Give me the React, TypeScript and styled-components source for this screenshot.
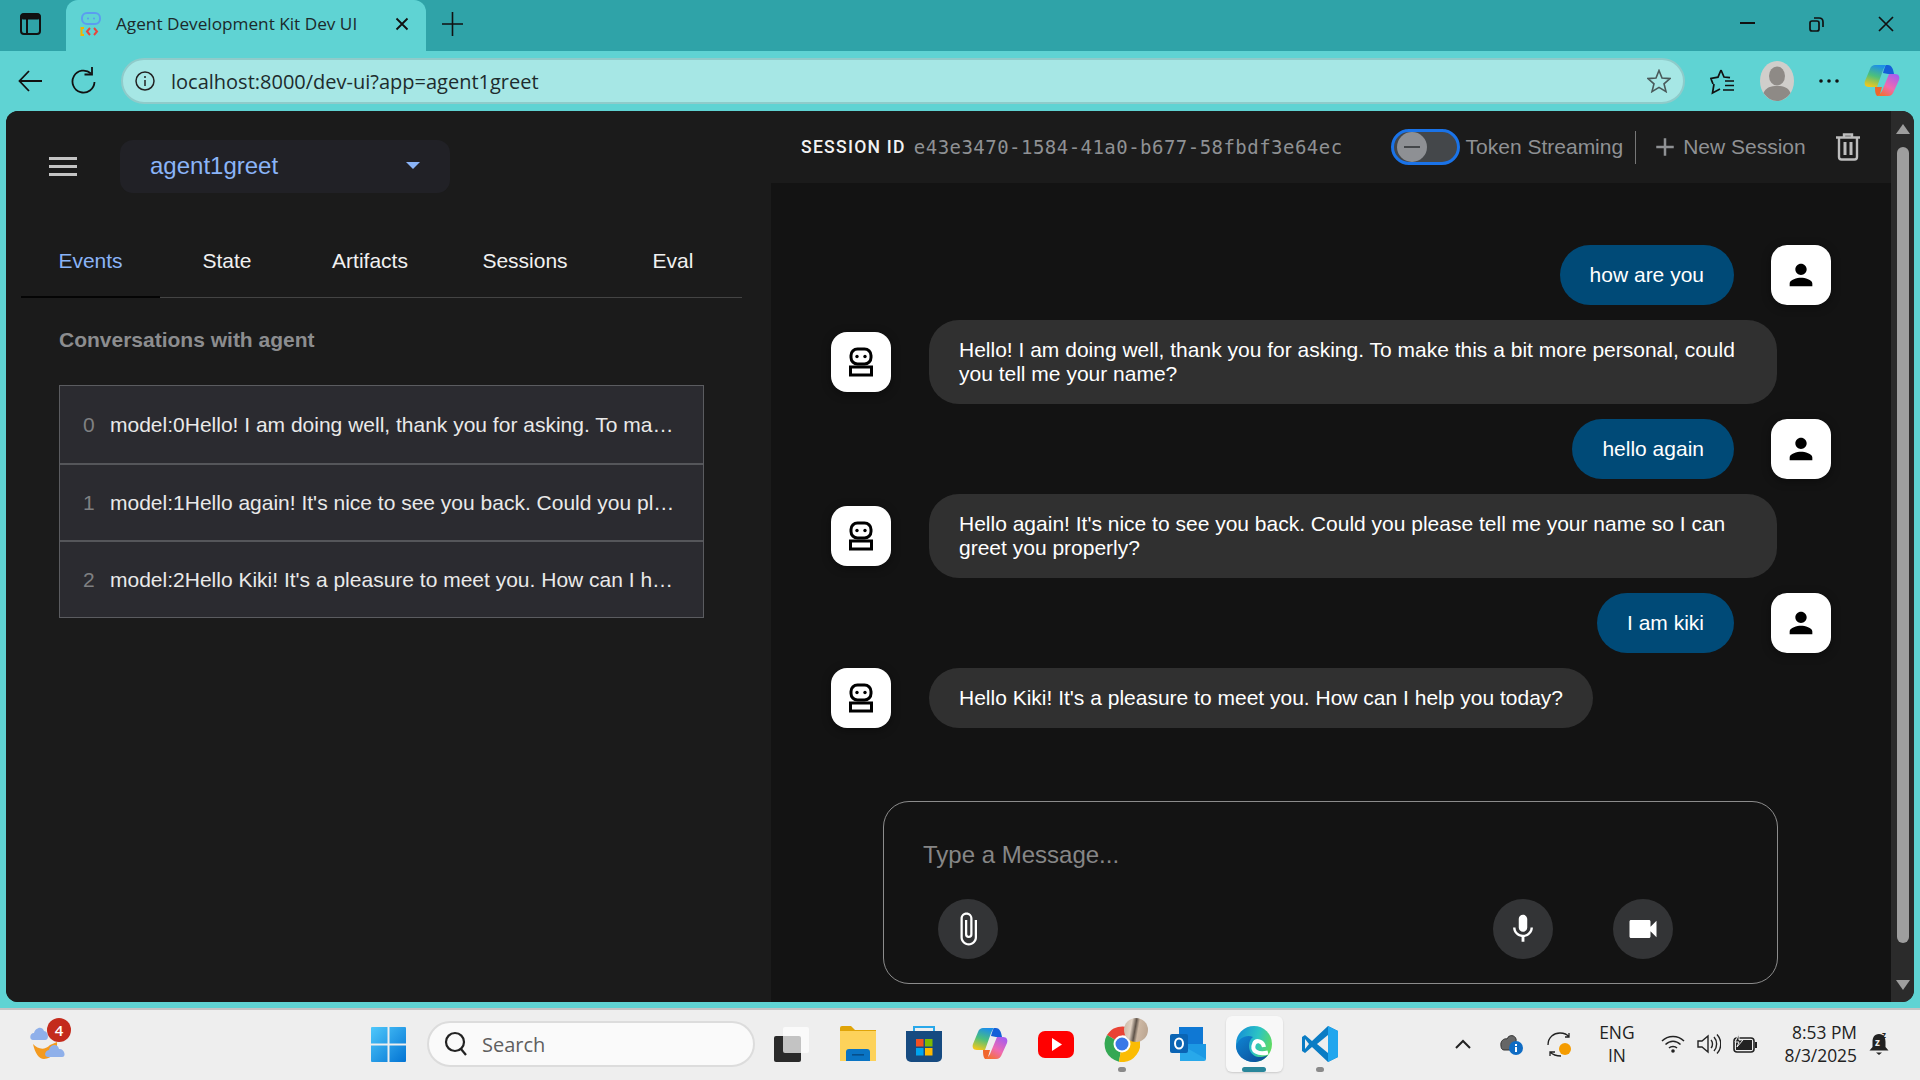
import styled, { createGlobalStyle } from "styled-components";
import { MdPerson, MdMic, MdVideocam, MdAttachFile, MdAdd } from "react-icons/md";

const Global = createGlobalStyle`
    html, body {
        margin: 0;
        padding: 0;
        width: 1920px;
        height: 1080px;
        overflow: hidden;
        background: #5fd3d3;
    }
    * { box-sizing: border-box; }
`

const Screen = styled.div`
    display: flex;
    flex-direction: column;
    width: 1920px;
    height: 1080px;
    font-family: "Liberation Sans", Arial, sans-serif;
`

/* browser chrome */
const TabStrip = styled.div`
    display: flex;
    align-items: center;
    height: 51px;
    background: #2fa3a8;
    padding: 0 0 4px 20px;
    color: #111;
`

const Tab = styled.div`
    display: flex;
    align-items: center;
    align-self: stretch;
    width: 360px;
    margin: 0 0 -4px 25px;
    padding: 0 17px 4px 14px;
    gap: 14px;
    background: #5fd3d3;
    border-radius: 12px 12px 0 0;
    font-family: "Open Sans", sans-serif;
    font-size: 17.2px;
    color: #1c2a2b;
    span { flex: 1; white-space: nowrap; }
`

const NewTab = styled.div`
    display: flex;
    margin-left: 16px;
`

const WinButtons = styled.div`
    display: flex;
    align-items: center;
    gap: 54px;
    margin-left: auto;
    padding-right: 26px;
`

const Toolbar = styled.div`
    display: flex;
    align-items: center;
    height: 60px;
    background: #5fd3d3;
    padding-left: 18px;
`

const NavIcons = styled.div`
    display: flex;
    align-items: center;
    gap: 29px;
    margin-right: 25px;
`

const AddressBar = styled.div`
    display: flex;
    align-items: center;
    width: 1564px;
    height: 46px;
    border-radius: 23px;
    background: #a6e7e5;
    border: 2px solid #8fcbca;
    padding: 0 12px;
    gap: 16px;
    font-family: "Open Sans", sans-serif;
    font-size: 20px;
    color: #1d2c2d;
    span { flex: 1; }
`

const ToolIcons = styled.div`
    display: flex;
    align-items: center;
    margin-left: 25px;
    gap: 25px;
`

const Workspace = styled.div`
    flex: 1;
    display: flex;
    min-height: 0;
    background: #5fd3d3;
    padding: 0 6px 6px 6px;
`

const AppWindow = styled.div`
    flex: 1;
    display: flex;
    border-radius: 12px;
    overflow: hidden;
    background: #1b1b1b;
    color: #fff;
`

/* left panel */
const SidePanel = styled.div`
    width: 765px;
    display: flex;
    flex-direction: column;
    background: #1b1b1b;
    padding: 29px 29px 0 15px;
`

const SideTop = styled.div`
    display: flex;
    align-items: center;
    height: 53px;
    padding-left: 28px;
    gap: 43px;
`

const Burger = styled.div`
    display: flex;
    flex-direction: column;
    gap: 5px;
    width: 28px;
    i { display: block; height: 3px; background: #c4c4c4; }
`

const AgentSelect = styled.div`
    display: flex;
    align-items: center;
    justify-content: space-between;
    width: 330px;
    height: 53px;
    padding: 0 30px 2px 30px;
    background: #212126;
    border-radius: 13px;
    color: #8ab4f8;
    font-size: 24px;
`

const Caret = styled.div`
    width: 0;
    height: 0;
    border-left: 7px solid transparent;
    border-right: 7px solid transparent;
    border-top: 7px solid #8ab4f8;
`

const Tabs = styled.div`
    display: grid;
    grid-template-columns: 139px 134px 152px 158px 138px;
    height: 74px;
    margin-top: 31px;
    border-bottom: 1px solid #444;
`

const TabItem = styled.div<{ $active?: boolean }>`
    display: flex;
    align-items: center;
    justify-content: center;
    margin-bottom: -1px;
    padding-top: 2px;
    font-size: 21px;
    color: ${p => (p.$active ? "#8ab4f8" : "#f1f1f1")};
    border-bottom: 2px solid ${p => (p.$active ? "#050505" : "transparent")};
`

const SectionTitle = styled.div`
    margin: 30px 0 0 38px;
    font-size: 21px;
    font-weight: 700;
    color: #8c8d8f;
    line-height: 24px;
`

const EventList = styled.div`
    display: flex;
    flex-direction: column;
    width: 645px;
    margin: 33px 0 0 38px;
    border: 1px solid #5b5c60;
`

const EventRow = styled.div`
    display: flex;
    align-items: center;
    height: 77px;
    padding: 0 28px 0 23px;
    background: #2b2b30;
    font-size: 21px;
    color: #e9e9e9;
    & + & { border-top: 2px solid #55565a; }
`

const EventIndex = styled.span`
    width: 27px;
    color: #7f8082;
`

const EventText = styled.span`
    flex: 1;
    min-width: 0;
    white-space: nowrap;
    overflow: hidden;
    text-overflow: ellipsis;
`

/* right panel */
const MainPanel = styled.div`
    flex: 1;
    display: flex;
    flex-direction: column;
    min-width: 0;
`

const TopBar = styled.div`
    display: flex;
    align-items: center;
    height: 72px;
    padding-left: 30px;
    background: #1b1b1b;
`

const SessionLabel = styled.span`
    font-family: Roboto, sans-serif;
    font-size: 17.6px;
    font-weight: 500;
    letter-spacing: 1.25px;
    color: #f2f2f2;
`

const SessionValue = styled.span`
    margin-left: 8px;
    font-family: "DejaVu Sans Mono", monospace;
    font-size: 19px;
    letter-spacing: 0.47px;
    color: #8f9194;
`

const Toggle = styled.div`
    display: flex;
    align-items: center;
    width: 69px;
    height: 36px;
    margin-left: 48px;
    padding-left: 3px;
    border: 3px solid #1a73e8;
    border-radius: 18px;
    background: #44474a;
`

const ToggleThumb = styled.div`
    display: flex;
    align-items: center;
    justify-content: center;
    width: 30px;
    height: 30px;
    border-radius: 50%;
    background: #8e9094;
    i { display: block; width: 16px; height: 2px; background: #44474a; }
`

const BarLabel = styled.span`
    font-size: 21px;
    color: #8f9194;
    white-space: nowrap;
`

const StreamLabel = styled(BarLabel)`
    margin-left: 6px;
`

const Divider = styled.div`
    width: 1px;
    height: 33px;
    margin: 0 12px;
    background: #777;
`

const NewSession = styled.div`
    display: flex;
    align-items: center;
    gap: 3px;
    margin-left: 2px;
    color: #8f9194;
`

const TrashBtn = styled.div`
    display: flex;
    margin-left: 30px;
`

const ChatArea = styled.div`
    flex: 1;
    display: flex;
    flex-direction: column;
    justify-content: space-between;
    min-height: 0;
    background: #131313;
    padding: 62px 60px 18px 60px;
`

const Messages = styled.div`
    display: flex;
    flex-direction: column;
    gap: 15px;
`

const MessageRow = styled.div<{ $user?: boolean }>`
    display: flex;
    align-items: center;
    justify-content: ${p => (p.$user ? "flex-end" : "flex-start")};
    gap: ${p => (p.$user ? "37px" : "38px")};
`

const Avatar = styled.div`
    flex: none;
    display: flex;
    align-items: center;
    justify-content: center;
    width: 60px;
    height: 60px;
    border-radius: 16px;
    background: #fff;
    color: #000;
    box-shadow: 0 2px 10px #00000066;
`

const Bubble = styled.div<{ $user?: boolean }>`
    padding: 18px 30px;
    max-width: 848px;
    border-radius: 30px;
    font-size: 21px;
    line-height: 24px;
    color: #fff;
    background: ${p => (p.$user ? "#004a77" : "#303030")};
`

const Composer = styled.div`
    display: flex;
    flex-direction: column;
    height: 183px;
    margin: 0 53px 0 52px;
    padding: 35px 104px 24px 39px;
    border: 1px solid #8c8c8c;
    border-radius: 26px;
`

const ComposerInput = styled.input`
    border: none;
    outline: none;
    background: transparent;
    height: 36px;
    padding: 0;
    font-family: "Liberation Sans", Arial, sans-serif;
    font-size: 24px;
    color: #fff;
    &::placeholder { color: #868686; opacity: 1; }
`

const ComposerActions = styled.div`
    display: flex;
    align-items: center;
    margin-top: auto;
    padding-left: 15px;
    gap: 60px;
`

const RoundBtn = styled.div<{ $push?: boolean }>`
    display: flex;
    align-items: center;
    justify-content: center;
    width: 60px;
    height: 60px;
    border-radius: 50%;
    background: #333436;
    color: #fff;
    margin-right: ${p => (p.$push ? "auto" : "0")};
`

const Scrollbar = styled.div`
    flex: none;
    width: 23px;
    display: flex;
    flex-direction: column;
    align-items: center;
    padding: 13px 0 12px;
    background: #2b2b2b;
`

const ScrollThumb = styled.div`
    flex: 1;
    width: 12px;
    margin: 13px 0 37px;
    border-radius: 6px;
    background: #9e9e9e;
`

const ScrollArrow = styled.div<{ $down?: boolean }>`
    width: 0;
    height: 0;
    border-left: 7px solid transparent;
    border-right: 7px solid transparent;
    ${p => (p.$down ? "border-top: 10px solid #9e9e9e;" : "border-bottom: 10px solid #9e9e9e;")}
`

/* windows taskbar */
const Taskbar = styled.div`
    display: flex;
    align-items: center;
    height: 72px;
    flex: none;
    padding-bottom: 2px;
    background: #eeeeee;
    border-top: 2px solid #c4c4c4;
    color: #1c1c1c;
`

const WeatherSlot = styled.div`
    position: relative;
    width: 371px;
    padding-left: 30px;
    display: flex;
`

const WeatherBadge = styled.div`
    position: absolute;
    left: 47px;
    top: -5px;
    width: 24px;
    height: 24px;
    border-radius: 50%;
    background: #c42b1c;
    color: #fff;
    font-family: "Open Sans", sans-serif;
    font-size: 15px;
    font-weight: 600;
    display: flex;
    align-items: center;
    justify-content: center;
`

const SearchBox = styled.div`
    display: flex;
    align-items: center;
    gap: 14px;
    width: 328px;
    height: 46px;
    margin: 0 19px 0 21px;
    padding-left: 15px;
    background: #fafafa;
    border: 2px solid #dcdcdc;
    border-radius: 23px;
    font-family: "Open Sans", sans-serif;
    font-size: 20px;
    color: #5f5f5f;
`

const AppIcons = styled.div`
    display: flex;
    align-items: center;
    gap: 30px;
`

const AppIcon = styled.div<{ $active?: boolean; $dot?: boolean }>`
    position: relative;
    display: flex;
    width: 36px;
    height: 36px;
    ${p => p.$active && `
        &::before {
            content: "";
            position: absolute;
            left: -10px;
            top: -10px;
            width: 57px;
            height: 56px;
            border-radius: 6px;
            background: #f8f8f8;
            box-shadow: 0 1px 2px #00000026;
        }
        &::after {
            content: "";
            position: absolute;
            left: 6px;
            top: 41px;
            width: 24px;
            height: 5px;
            border-radius: 3px;
            background: #28869a;
        }
    `}
    ${p => p.$dot && `
        &::after {
            content: "";
            position: absolute;
            left: 14px;
            top: 41px;
            width: 8px;
            height: 5px;
            border-radius: 3px;
            background: #8a8a8a;
        }
    `}
    svg { position: relative; }
`

const ChromeSticker = styled.div`
    position: absolute;
    left: 20px;
    top: -8px;
    width: 24px;
    height: 24px;
    border-radius: 50%;
    background: linear-gradient(100deg, #c9b5a2 0%, #e2d3c4 30%, #5f5349 46%, #cdb8a4 58%, #b8a28e 100%);
`

const Tray = styled.div`
    display: flex;
    align-items: center;
    margin-left: auto;
    padding-right: 31px;
`

const TrayItem = styled.div<{ $gap: number }>`
    display: flex;
    margin-left: ${p => p.$gap}px;
`

const TrayText = styled.div<{ $gap: number; $align: string }>`
    margin-left: ${p => p.$gap}px;
    text-align: ${p => p.$align};
    font-family: "Open Sans", sans-serif;
    font-size: 17.4px;
    line-height: 23px;
    color: #222;
    white-space: nowrap;
`

const stroke = { fill: "none", stroke: "currentColor" };

function BotGlyph() {
    return (
        <svg width="26" height="30" viewBox="0 0 26 30">
            <rect x="3" y="2" width="20" height="15" rx="6.5" fill="none" stroke="#000" strokeWidth="3" />
            <circle cx="9" cy="9.5" r="1.7" fill="#000" />
            <circle cx="17" cy="9.5" r="1.7" fill="#000" />
            <rect x="2.5" y="20" width="21" height="8" fill="none" stroke="#000" strokeWidth="3" />
        </svg>
    );
}

function Favicon() {
    return (
        <svg width="22" height="26" viewBox="0 0 22 26">
            <rect x="2" y="2" width="18" height="11" rx="5" fill="none" stroke="#5b9df0" strokeWidth="2" />
            <circle cx="8" cy="7.5" r="1" fill="#5b9df0" />
            <circle cx="14" cy="7.5" r="1" fill="#5b9df0" />
            <path d="M4 17 L1.5 17 L1.5 24 L4 24" fill="none" stroke="#f4b400" strokeWidth="2" />
            <path d="M10 17 L7 20.5 L10 24" fill="none" stroke="#e8453c" strokeWidth="2" />
            <path d="M14 17 L17 20.5 L14 24" fill="none" stroke="#e8453c" strokeWidth="2" />
        </svg>
    );
}

function Copilot({ id }: { id: string }) {
    return (
        <svg width="36" height="36" viewBox="0 0 36 36">
            <defs>
                <linearGradient id={id + "a"} x1="0.6" y1="0" x2="0.3" y2="1">
                    <stop offset="0" stopColor="#1d8fe8" />
                    <stop offset="0.5" stopColor="#4cc07c" />
                    <stop offset="1" stopColor="#f2c81c" />
                </linearGradient>
                <linearGradient id={id + "b"} x1="0.8" y1="0" x2="0.2" y2="1">
                    <stop offset="0" stopColor="#a45cf0" />
                    <stop offset="0.55" stopColor="#ef6ab0" />
                    <stop offset="1" stopColor="#f5702e" />
                </linearGradient>
            </defs>
            <path d="M22 2 H24 C27 2 29 5 30 11 H24 L19 10 C20 6 21 3 22 2Z" fill="#1460d8" />
            <path d="M13 24 H18 L16 31 C15.5 33 14 33 13 33 C11 31 11 27 11 24Z" fill="#f0662c" />
            <path d="M11 2 H22 C20 4 19 7 18 10 L13 24 H5 C1 24 0 21 1 18 L6 6 C7 3 9 2 11 2Z" fill={`url(#${id}a)`} />
            <path d="M25 11 H31 C35 11 36 14 35 17 L30 28 C29 31 27 33 24 33 H13 C15 32 17 30 18 28Z" fill={`url(#${id}b)`} />
        </svg>
    );
}

const events = [
    "model:0Hello! I am doing well, thank you for asking. To make this a bit more personal, could you tell me your name?",
    "model:1Hello again! It's nice to see you back. Could you please tell me your name so I can greet you properly?",
    "model:2Hello Kiki! It's a pleasure to meet you. How can I help you today?",
];

const chat = [
    { user: true, text: "how are you" },
    { user: false, text: "Hello! I am doing well, thank you for asking. To make this a bit more personal, could you tell me your name?" },
    { user: true, text: "hello again" },
    { user: false, text: "Hello again! It's nice to see you back. Could you please tell me your name so I can greet you properly?" },
    { user: true, text: "I am kiki" },
    { user: false, text: "Hello Kiki! It's a pleasure to meet you. How can I help you today?" },
];

function App(): JSX.Element {
    return (
        <Screen>
            <Global />
            <TabStrip>
                <svg width="21" height="22" viewBox="0 0 21 22" style={stroke}>
                    <rect x="1" y="1" width="19" height="20" rx="3" strokeWidth="2" stroke="#111" />
                    <rect x="1" y="1" width="19" height="5" rx="2" fill="#111" stroke="#111" />
                    <path d="M7 6 V21" stroke="#111" strokeWidth="2" />
                </svg>
                <Tab>
                    <Favicon />
                    <span>Agent Development Kit Dev UI</span>
                    <svg width="14" height="14" viewBox="0 0 14 14"><path d="M1.5 1.5 L12.5 12.5 M12.5 1.5 L1.5 12.5" stroke="#111" strokeWidth="1.8" /></svg>
                </Tab>
                <NewTab>
                    <svg width="21" height="24" viewBox="0 0 21 24"><path d="M10.5 0 V24 M0 12 H21" stroke="#111" strokeWidth="1.6" /></svg>
                </NewTab>
                <WinButtons>
                    <svg width="15" height="3" viewBox="0 0 15 3"><rect width="15" height="2" fill="#111" /></svg>
                    <svg width="15" height="16" viewBox="0 0 15 16" fill="none" stroke="#111" strokeWidth="1.7"><rect x="1" y="5" width="9" height="10" rx="2" /><path d="M5 2 H10 C12.5 2 14 3.5 14 6 V11" /></svg>
                    <svg width="16" height="16" viewBox="0 0 16 16"><path d="M1 1 L15 15 M15 1 L1 15" stroke="#111" strokeWidth="1.7" /></svg>
                </WinButtons>
            </TabStrip>

            <Toolbar>
                <NavIcons>
                    <svg width="24" height="24" viewBox="0 0 24 24" fill="none" stroke="#111" strokeWidth="1.8"><path d="M24 12 H1.5 M11 2 L1.5 12 L11 22" /></svg>
                    <svg width="25" height="28" viewBox="0 0 25 28" fill="none" stroke="#111" strokeWidth="1.8"><path d="M20 6.5 A11 11 0 1 0 23.5 15" /><path d="M21 0 V7.5 H13.5" /></svg>
                </NavIcons>
                <AddressBar>
                    <svg width="20" height="20" viewBox="0 0 20 20" fill="none" stroke="#222" strokeWidth="1.5"><circle cx="10" cy="10" r="9" /><path d="M10 9 V15 M10 5 V7" /></svg>
                    <span>localhost:8000/dev-ui?app=agent1greet</span>
                    <svg width="24" height="24" viewBox="0 0 24 24" fill="none" stroke="#4a5a5b" strokeWidth="1.6"><path d="M12 1.5 L15 9 L23 9.6 L17 14.8 L19 22.6 L12 18.4 L5 22.6 L7 14.8 L1 9.6 L9 9Z" /></svg>
                </AddressBar>
                <ToolIcons>
                    <svg width="25" height="27" viewBox="0 0 25 27" fill="none" stroke="#111" strokeWidth="1.7"><path d="M11 2 L14 9 L20 9.6 M3 16 L0.9 10.5 L8 9.2 L11 2 M4 16 L2.5 25 L10 21" /><path d="M15 13 H24 M15 17.5 H24 M13 22 H24" /></svg>
                    <svg width="34" height="40" viewBox="0 0 34 40"><ellipse cx="17" cy="20" rx="17" ry="20" fill="#d0cecb" /><ellipse cx="17" cy="15" rx="8" ry="9.5" fill="#8e8a86" /><path d="M3.5 32 C6 26 11 25 17 25 C23 25 28 26 30.5 32 C27 37 22 40 17 40 C12 40 7 37 3.5 32Z" fill="#8e8a86" /></svg>
                    <svg width="20" height="4" viewBox="0 0 20 4"><circle cx="2" cy="2" r="1.8" fill="#111" /><circle cx="10" cy="2" r="1.8" fill="#111" /><circle cx="18" cy="2" r="1.8" fill="#111" /></svg>
                    <Copilot id="cpTool" />
                </ToolIcons>
            </Toolbar>

            <Workspace>
                <AppWindow>
                    <SidePanel>
                        <SideTop>
                            <Burger><i /><i /><i /></Burger>
                            <AgentSelect>
                                agent1greet
                                <Caret />
                            </AgentSelect>
                        </SideTop>
                        <Tabs>
                            <TabItem $active>Events</TabItem>
                            <TabItem>State</TabItem>
                            <TabItem>Artifacts</TabItem>
                            <TabItem>Sessions</TabItem>
                            <TabItem>Eval</TabItem>
                        </Tabs>
                        <SectionTitle>Conversations with agent</SectionTitle>
                        <EventList>
                            {events.map((text, i) => (
                                <EventRow key={i}>
                                    <EventIndex>{i}</EventIndex>
                                    <EventText>{text}</EventText>
                                </EventRow>
                            ))}
                        </EventList>
                    </SidePanel>

                    <MainPanel>
                        <TopBar>
                            <SessionLabel>SESSION ID</SessionLabel>
                            <SessionValue>e43e3470-1584-41a0-b677-58fbdf3e64ec</SessionValue>
                            <Toggle><ToggleThumb><i /></ToggleThumb></Toggle>
                            <StreamLabel>Token Streaming</StreamLabel>
                            <Divider />
                            <NewSession>
                                <MdAdd size={30} />
                                <BarLabel>New Session</BarLabel>
                            </NewSession>
                            <TrashBtn>
                                <svg width="24" height="28" viewBox="0 0 24 28" fill="none" stroke="#bdbdbd" strokeWidth="2.4"><path d="M0 4.5 H24" /><path d="M8 4 V1.5 H16 V4" /><path d="M3 5 V24 C3 25.5 4 26.5 5.5 26.5 H18.5 C20 26.5 21 25.5 21 24 V5" /><path d="M9 9 V22 M15 9 V22" strokeWidth="3" /></svg>
                            </TrashBtn>
                        </TopBar>
                        <ChatArea>
                            <Messages>
                                {chat.map((m, i) => (
                                    <MessageRow key={i} $user={m.user}>
                                        {!m.user && <Avatar><BotGlyph /></Avatar>}
                                        <Bubble $user={m.user}>{m.text}</Bubble>
                                        {m.user && <Avatar><MdPerson size={34} /></Avatar>}
                                    </MessageRow>
                                ))}
                            </Messages>
                            <Composer>
                                <ComposerInput placeholder="Type a Message..." />
                                <ComposerActions>
                                    <RoundBtn $push><MdAttachFile size={36} /></RoundBtn>
                                    <RoundBtn><MdMic size={34} /></RoundBtn>
                                    <RoundBtn><MdVideocam size={36} /></RoundBtn>
                                </ComposerActions>
                            </Composer>
                        </ChatArea>
                    </MainPanel>

                    <Scrollbar>
                        <ScrollArrow />
                        <ScrollThumb />
                        <ScrollArrow $down />
                    </Scrollbar>
                </AppWindow>
            </Workspace>

            <Taskbar>
                <WeatherSlot>
                    <svg width="38" height="42" viewBox="0 0 38 42">
                        <path d="M3 21 C8 26 14 28 20 22 L27 19 C28 27 22 36 14 36 C9 36 5 30 3 21Z" fill="#f39a1f" />
                        <path d="M3 17 C-1 17 -0.5 10 4 10 C5 5 12 2 14 8 C18 8 20 17 15 17Z" fill="#8fb0ea" />
                        <path d="M18 34 C14 34 14 28 19 27 C20 21 28 20 29 26 C34 25 37 34 32 34Z" fill="#8fb0ea" />
                    </svg>
                    <WeatherBadge>4</WeatherBadge>
                </WeatherSlot>
                <svg width="35" height="35" viewBox="0 0 35 35">
                    <defs><linearGradient id="win" x1="0" y1="0" x2="1" y2="1"><stop offset="0" stopColor="#4fc8fb" /><stop offset="1" stopColor="#0273d3" /></linearGradient></defs>
                    <path d="M0 1 a1 1 0 0 1 1 -1 H16.5 V16.5 H0Z M18.5 0 H34 a1 1 0 0 1 1 1 V16.5 H18.5Z M0 18.5 H16.5 V35 H1 a1 1 0 0 1 -1 -1Z M18.5 18.5 H35 V34 a1 1 0 0 1 -1 1 H18.5Z" fill="url(#win)" />
                </svg>
                <SearchBox>
                    <svg width="24" height="26" viewBox="0 0 24 26" fill="none" stroke="#222" strokeWidth="2.2"><circle cx="11" cy="11" r="9" /><path d="M17 18 L22 24" /></svg>
                    Search
                </SearchBox>
                <AppIcons>
                    <AppIcon>
                        <svg width="36" height="36" viewBox="0 0 36 36"><rect x="0" y="10" width="27" height="26" rx="2" fill="#2a2a2a" /><rect x="9" y="1" width="26" height="26" rx="2" fill="#ffffff" opacity="0.72" /></svg>
                    </AppIcon>
                    <AppIcon>
                        <svg width="36" height="36" viewBox="0 0 36 36"><path d="M0 2 a2 2 0 0 1 2 -2 H11 L15 4 H36 V35 H0Z" fill="#e0a408" /><rect x="0" y="5" width="36" height="30" fill="#fdd25a" /><path d="M6 35 V26 a3 3 0 0 1 3 -3 H27 a3 3 0 0 1 3 3 V35Z" fill="#0a74c4" /><rect x="12" y="28" width="12" height="1.6" fill="#064f8b" /></svg>
                    </AppIcon>
                    <AppIcon>
                        <svg width="36" height="36" viewBox="0 0 36 36"><path d="M8 6 V1 H28 V6" fill="none" stroke="#29a8ea" strokeWidth="2" /><path d="M0 5 H36 V31 a5 5 0 0 1 -5 5 H5 a5 5 0 0 1 -5 -5Z" fill="#164a80" /><rect x="10" y="13" width="7.5" height="7.5" fill="#f25022" /><rect x="19" y="13" width="7.5" height="7.5" fill="#7fba00" /><rect x="10" y="22" width="7.5" height="7.5" fill="#00a4ef" /><rect x="19" y="22" width="7.5" height="7.5" fill="#ffb900" /></svg>
                    </AppIcon>
                    <AppIcon><Copilot id="cpTask" /></AppIcon>
                    <AppIcon>
                        <svg width="36" height="36" viewBox="0 0 36 36"><rect x="0" y="5" width="36" height="27" rx="7" fill="#f00" /><path d="M14 12 L24 18.5 L14 25Z" fill="#fff" /></svg>
                    </AppIcon>
                    <AppIcon $dot>
                        <svg width="36" height="36" viewBox="0 0 36 36">
                            <path d="M18 18 L3 9 A18 18 0 0 1 34 9.5 L18 9.5Z" fill="#ea4335" />
                            <path d="M18 18 L3 9 A18 18 0 0 0 15 35.7 L18 18Z" fill="#34a853" />
                            <path d="M18 18 L34 9.5 A18 18 0 0 1 15 35.7Z" fill="#fbbc04" />
                            <circle cx="18" cy="18" r="8.5" fill="#fff" />
                            <circle cx="18" cy="18" r="6.5" fill="#3b78e7" />
                        </svg>
                        <ChromeSticker />
                    </AppIcon>
                    <AppIcon>
                        <svg width="36" height="36" viewBox="0 0 36 36"><rect x="9" y="1" width="24" height="20" fill="#0f78d4" /><path d="M10 18 H36 V33 a2 2 0 0 1 -2 2 H10Z" fill="#28a8ea" /><path d="M10 18 L36 33 V18Z" fill="#1490df" opacity="0.6" /><rect x="0" y="8" width="18" height="19" rx="2" fill="#0a64b4" /><ellipse cx="9" cy="17.5" rx="4" ry="5" fill="none" stroke="#fff" strokeWidth="2" /></svg>
                    </AppIcon>
                    <AppIcon $active>
                        <svg width="36" height="36" viewBox="0 0 36 36">
                            <defs>
                                <linearGradient id="edgeA" x1="0" y1="0.3" x2="1" y2="0.6"><stop offset="0" stopColor="#1590d6" /><stop offset="0.55" stopColor="#2cc4c4" /><stop offset="1" stopColor="#62dc5c" /></linearGradient>
                                <linearGradient id="edgeB" x1="0" y1="0" x2="1" y2="1"><stop offset="0" stopColor="#0f86d4" /><stop offset="1" stopColor="#0c4a94" /></linearGradient>
                            </defs>
                            <circle cx="18" cy="18" r="18" fill="url(#edgeA)" />
                            <path d="M0 20 C3 11 11 8 17 11 C13 14 12 20 14 25 C17 31 24 33 32 29 C28 34 23 36 18 36 C8 36 0 29 0 20Z" fill="url(#edgeB)" />
                            <path d="M28 21 C27 15 20 13 18 18 C15 25 22 29 32 26.5" fill="none" stroke="#fff" strokeWidth="4" />
                        </svg>
                    </AppIcon>
                    <AppIcon $dot>
                        <svg width="36" height="36" viewBox="0 0 36 36"><path d="M26 0 L36 5 V31 L26 36 L10 21 L3 27 L0 25 V11 L3 9 L10 15Z" fill="#0a7cc4" /><path d="M26 0 L36 5 V31 L26 36Z" fill="#21a6ee" /><path d="M26 9 L15 18 L26 27Z" fill="#eeeeee" /><path d="M3 13 L7 18 L3 23Z" fill="#eeeeee" /></svg>
                    </AppIcon>
                </AppIcons>
                <Tray>
                    <svg width="16" height="10" viewBox="0 0 16 10" fill="none" stroke="#222" strokeWidth="2"><path d="M1 9 L8 2 L15 9" /></svg>
                    <TrayItem $gap={28}>
                        <svg width="24" height="22" viewBox="0 0 24 22"><path d="M2 13 C1 8 5 5 8 6 C10 1 16 2 17 6 C18 8 14 16 11 17 H5 C3 17 2 15 2 13Z" fill="#666" stroke="#333" /><circle cx="17" cy="15" r="7" fill="#0f6cc4" /><rect x="16" y="14" width="2" height="5" fill="#fff" /><rect x="16" y="11" width="2" height="2" fill="#fff" /></svg>
                    </TrayItem>
                    <TrayItem $gap={24}>
                        <svg width="25" height="25" viewBox="0 0 25 25" fill="none" stroke="#222" strokeWidth="1.3"><path d="M1 13 C1 5 7 1 13 1 C17 1 20 2 22 5 M22 1 V5 H18" /><path d="M14 24 C9 24 6 23 3 20 M8 20 H3 V24" /><circle cx="18" cy="17" r="6" fill="#f59c00" stroke="none" /></svg>
                    </TrayItem>
                    <TrayText $gap={27} $align="center">ENG<br />IN</TrayText>
                    <TrayItem $gap={26}>
                        <svg width="24" height="18" viewBox="0 0 24 18" fill="none" stroke="#222" strokeWidth="1.5"><path d="M1 6 C7 0 17 0 23 6 M4.5 9.5 C9 5 15 5 19.5 9.5 M8 13 C10 11 14 11 16 13" /><circle cx="12" cy="16" r="1.8" fill="#222" stroke="none" /></svg>
                    </TrayItem>
                    <TrayItem $gap={12}>
                        <svg width="24" height="22" viewBox="0 0 24 22" fill="none" stroke="#222" strokeWidth="1.4"><path d="M1 8 H5 L11 3 V19 L5 14 H1Z" /><path d="M14 7 C16 9 16 13 14 15 M17 4 C20.5 8 20.5 14 17 18 M20 1.5 C25 7 25 15 20 20.5" /></svg>
                    </TrayItem>
                    <TrayItem $gap={12}>
                        <svg width="24" height="20" viewBox="0 0 24 20"><rect x="1" y="4" width="20" height="14" rx="3" fill="none" stroke="#222" strokeWidth="1.6" /><rect x="3" y="6" width="16" height="10" fill="#222" /><rect x="22" y="8" width="2" height="6" fill="#222" /><path d="M6 0 L2 8 H6 L4 13 L10 6 H6Z" fill="#222" stroke="#eee" /></svg>
                    </TrayItem>
                    <TrayText $gap={28} $align="right">8:53 PM<br />8/3/2025</TrayText>
                    <TrayItem $gap={12}>
                        <svg width="20" height="24" viewBox="0 0 20 24"><path d="M10 2 C5 2 3.5 6 3.5 10 V15 L0.5 18.5 H19.5 L16.5 15 V10 C16.5 6 15 2 10 2Z" fill="#222" /><path d="M7 20.5 H13 L10 23Z" fill="#222" /><text x="6" y="14" fontSize="10" fontWeight="700" fill="#eee" fontFamily="Open Sans, sans-serif">z</text><text x="13" y="6" fontSize="8" fontWeight="700" fill="#222" fontFamily="Open Sans, sans-serif">z</text></svg>
                    </TrayItem>
                </Tray>
            </Taskbar>
        </Screen>
    );
}

export default App;
